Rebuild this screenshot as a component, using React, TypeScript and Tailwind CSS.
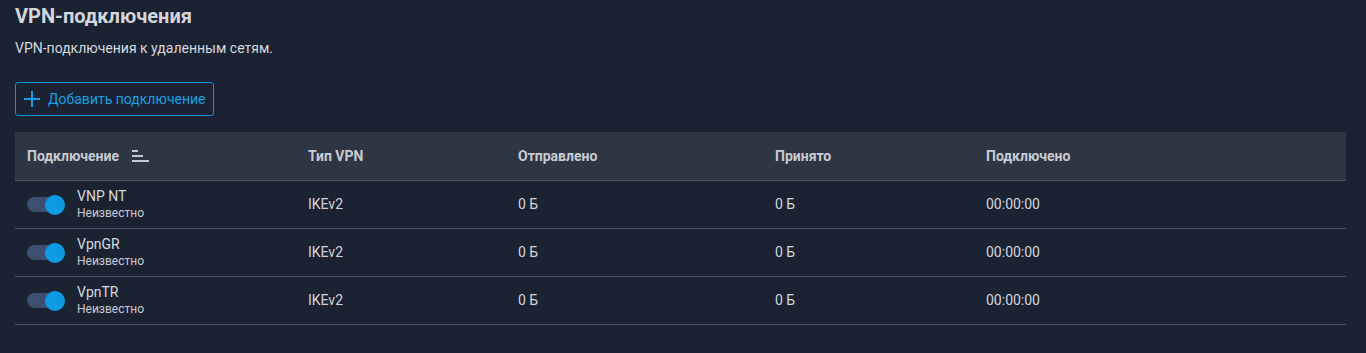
import React from "react";

const rows = [
  { name: "VNP NT" },
  { name: "VpnGR" },
  { name: "VpnTR" },
];

function Toggle() {
  return (
    <div className="relative w-[38px] h-[20px] flex items-center">
      <div className="w-[32px] h-[15px] rounded-full bg-[#3f4f6f]" />
      <div className="absolute left-[18px] top-0 w-[20px] h-[20px] rounded-full bg-[#0a9be3]" />
    </div>
  );
}

function SortIcon() {
  return (
    <svg width="17" height="14" viewBox="0 0 17 14" className="ml-[13px]">
      <rect x="0" y="1" width="6" height="2" fill="#c6cad1" />
      <rect x="0" y="6" width="11" height="2" fill="#c6cad1" />
      <rect x="0" y="11" width="17" height="2" fill="#c6cad1" />
    </svg>
  );
}

export default function App() {
  return (
    <div
      className="w-[1366px] h-[353px] bg-[#1b2333] text-[#d3d6db] px-[15px] pt-[3px]"
      style={{ fontFamily: "Roboto, 'Noto Sans', sans-serif" }}
    >
      <h1 className="text-[20px] font-bold leading-[24px] text-[#d3d6db] mt-[1px]">
        VPN-подключения
      </h1>
      <p className="text-[14px] leading-[16px] mt-[12px] text-[#d6d9de]">
        VPN-подключения к удаленным сетям.
      </p>
      <button className="mt-[26px] h-[34px] flex items-center border border-[#0b95d8] rounded-[3px] pl-[8px] pr-[7px] text-[#1a9ee6] text-[14px]">
        <svg width="16" height="16" viewBox="0 0 16 16" className="mr-[8px]">
          <path d="M8 0 V16 M0 8 H16" stroke="#1a9ee6" strokeWidth="2" />
        </svg>
        Добавить подключение
      </button>
      <div className="mt-[16px] w-[1331px]">
        <div className="h-[49px] bg-[#2e3543] border-b border-[#4b5260] flex items-center text-[14px] font-bold text-[#c8ccd2]">
          <div className="w-[293px] pl-[12px] flex items-center">
            Подключение
            <SortIcon />
          </div>
          <div className="w-[210px]">Тип VPN</div>
          <div className="w-[257px]">Отправлено</div>
          <div className="w-[211px]">Принято</div>
          <div className="flex-1">Подключено</div>
        </div>
        {rows.map((r) => (
          <div
            key={r.name}
            className="h-[48px] border-b border-[#4b5260] flex items-center text-[14px] text-[#d3d6db]"
          >
            <div className="w-[293px] pl-[12px] flex items-center">
              <Toggle />
              <div className="ml-[12px] flex flex-col">
                <span className="text-[14px] leading-[17px] text-[#d6d9de]">{r.name}</span>
                <span className="text-[12px] leading-[15px] mt-[1px] text-[#c8ccd2]">Неизвестно</span>
              </div>
            </div>
            <div className="w-[210px]">IKEv2</div>
            <div className="w-[257px]">0 Б</div>
            <div className="w-[211px]">0 Б</div>
            <div className="flex-1">00:00:00</div>
          </div>
        ))}
      </div>
    </div>
  );
}
